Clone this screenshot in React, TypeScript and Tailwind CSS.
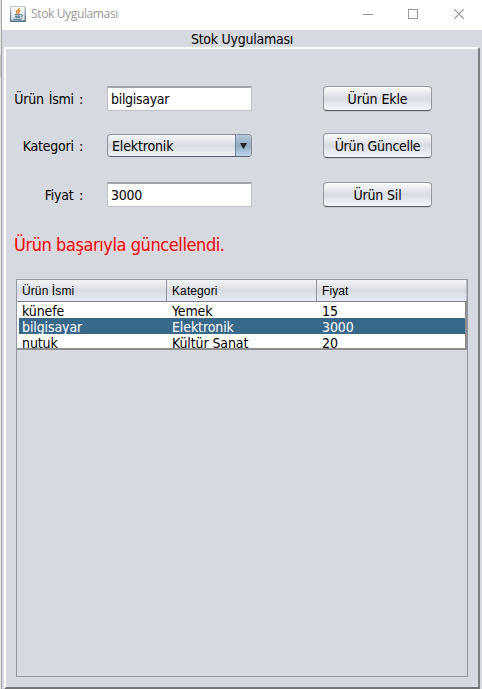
import React from "react";

const TAHOMA = "font-['DejaVu_Sans_Condensed','DejaVu_Sans',sans-serif] [font-stretch:condensed]";

function JavaIcon() {
  return (
    <svg width="16" height="16" viewBox="0 0 16 16" className="block shrink-0">
      <defs>
        <linearGradient id="frame" x1="0" y1="0" x2="0" y2="1">
          <stop offset="0" stopColor="#c3ccd3" />
          <stop offset="1" stopColor="#456984" />
        </linearGradient>
        <linearGradient id="face" x1="0" y1="0" x2="0" y2="1">
          <stop offset="0" stopColor="#fafafa" />
          <stop offset="1" stopColor="#d9e1e6" />
        </linearGradient>
      </defs>
      <rect x="0" y="0" width="16" height="16" rx="1.5" fill="url(#frame)" />
      <rect x="1.2" y="1" width="13.4" height="13.6" rx="0.8" fill="url(#face)" />
      <path d="M9.3 1.8C9.8 4 6 4.6 6.4 6.4c.1.6.7 1 1 1.5M10.4 4.4C8.6 5 8 5.8 8.6 6.6c.4.6.2 1-.2 1.5" fill="none" stroke="#ee7f1f" strokeWidth="1.3" />
      <path d="M4.6 8.7h6.2M5 10.3h5.4M5.4 11.7h4.4M3.2 13.1c2.4.8 6.6.7 8.8-.3M11 8.8c2.2-.6 2.4 1.4-.1 2.3" fill="none" stroke="#3f6a8c" strokeWidth="0.95" />
    </svg>
  );
}

function TitleBar() {
  return (
    <header className="flex h-[30px] shrink-0 items-start bg-white">
      <div className="flex items-center gap-[5px] pl-2 pt-1.5">
        <JavaIcon />
        <span className="font-['Open_Sans','Noto_Sans',sans-serif] text-[12px] leading-[16px] tracking-[-0.36px] text-[#999] [font-stretch:normal]">
          Stok Uygulaması
        </span>
      </div>
      <div className="ml-auto flex gap-[35px] pr-[17px] pt-[9px]">
        <svg width="11" height="11" viewBox="0 0 11 11" shapeRendering="crispEdges">
          <path d="M0 5.5h10" stroke="#999" />
        </svg>
        <svg width="11" height="11" viewBox="0 0 11 11" shapeRendering="crispEdges" className="-ml-px">
          <rect x="0.5" y="0.5" width="9" height="9" fill="none" stroke="#999" />
        </svg>
        <svg width="11" height="11" viewBox="0 0 11 11">
          <path d="M0.2 0.2l9.6 9.6M9.8 0.2l-9.6 9.6" stroke="#909090" strokeWidth="1.1" />
        </svg>
      </div>
    </header>
  );
}

function Label({ children, className = "" }: { children: string; className?: string }) {
  return (
    <label className={`w-[77px] shrink-0 whitespace-nowrap text-right leading-[26px] ${className}`}>{children}</label>
  );
}

function TextField({ value }: { value: string }) {
  return (
    <div className="ml-6 h-[25px] w-[145px] shrink-0 border border-t-2 border-[#bfc1c5] border-t-[#a2a3a6] bg-white pl-[3px] leading-[22px] tracking-[-0.3px]">
      {value}
    </div>
  );
}

function Combo() {
  return (
    <div className="ml-6 flex h-[23px] w-[145px] shrink-0 overflow-hidden rounded-[4px] border border-[#8c9099] border-b-[#5b6170] bg-linear-to-b from-[#f6f7f9] via-[#d9dce2] to-[#f0f2f8]">
      <span className="grow pl-1 leading-[22px] tracking-[-0.15px]">Elektronik</span>
      <span className="flex w-4 items-center justify-center border-l border-[#6d8499] bg-linear-to-b from-[#b5c8d9] via-[#8facc4] to-[#bdd6ea]">
        <svg width="7" height="6" viewBox="0 0 7 6">
          <path d="M0 0h7L4 5.5H3z" fill="#222" />
        </svg>
      </span>
    </div>
  );
}

function Button({ children, className = "tracking-[-0.1px]" }: { children: string; className?: string }) {
  return (
    <button className={`ml-[71px] h-[25px] w-[109px] shrink-0 whitespace-nowrap rounded-[4px] border border-[#94979e] border-b-[#5c5e64] bg-linear-to-b from-[#fafbfc] via-[#d9dce2] to-[#f4f6fb] text-center leading-[22px] shadow-[0_1px_0_#c3c6cc] ${className}`}>
      {children}
    </button>
  );
}

const rows = [
  ["künefe", "Yemek", "15"],
  ["bilgisayar", "Elektronik", "3000"],
  ["nutuk", "Kültür Sanat", "20"],
];

function Table() {
  return (
    <section className="ml-[10px] mt-[23px] h-[398px] w-[452px] border border-[#9297a1]">
      <div className="flex h-[22px] border-b border-[#7c808a] bg-linear-to-b from-[#f4f5f7] via-[#d8dbe1] to-[#e8ebf4] font-['Liberation_Sans',Arial,sans-serif] text-[12px] leading-[22px] tracking-[0.1px]">
        {["Ürün İsmi", "Kategori", "Fiyat"].map((h) => (
          <div key={h} className="w-[150px] border-r border-[#8f949e] pl-[5px] last:border-[#b6bac3]">
            {h}
          </div>
        ))}
      </div>
      <div className="h-12 overflow-hidden border-b-2 border-r-2 border-[#8e8e8e] bg-white pl-0.5 tracking-[-0.1px]">
        {rows.map((r) => (
          <div
            key={r[0]}
            className={`flex h-4 overflow-hidden leading-[18px] ${r[0] === "bilgisayar" ? "bg-[#39698a] text-white" : ""}`}
          >
            <div className="w-[150px] shrink-0 pl-[3px]">{r[0]}</div>
            <div className="w-[150px] shrink-0 pl-[3px]">{r[1]}</div>
            <div className="pl-[3px]">{r[2]}</div>
          </div>
        ))}
      </div>
    </section>
  );
}

export default function App() {
  return (
    <div className={`flex h-[689px] w-[482px] overflow-hidden text-[14px] tracking-[-0.25px] text-black ${TAHOMA}`}>
      <div className="w-0.5 shrink-0 border-r border-[#a3a4a6] bg-[#e4e5e6]">
        <div className="mt-[55px] h-[22px] bg-[#c5c6c8]" />
      </div>
      <main className="flex w-[480px] flex-col bg-[#d6d9df]">
        <TitleBar />
        <h1 className="h-[17px] shrink-0 text-center leading-[18px]">Stok Uygulaması</h1>
        <div className="ml-0.5 flex h-[642px] w-[476px] flex-col border-2 border-b-[#737476] border-l-white border-r-[#7c7d80] border-t-white">
          <div className="mt-[37px] flex h-[25px]">
            <Label className="[word-spacing:1.4px]">Ürün İsmi :</Label>
            <TextField value="bilgisayar" />
            <Button>Ürün Ekle</Button>
          </div>
          <div className="mt-[22px] flex h-[25px] items-center">
            <Label className="[word-spacing:1.6px]">Kategori :</Label>
            <Combo />
            <Button className="tracking-[-0.3px]">Ürün Güncelle</Button>
          </div>
          <div className="mt-6 flex h-[25px]">
            <Label className="[word-spacing:1.8px]">Fiyat :</Label>
            <TextField value="3000" />
            <Button className="tracking-[-0.15px]">Ürün Sil</Button>
          </div>
          <p className="ml-2 mt-[25px] h-6 text-[18px] leading-[25px] tracking-[-0.42px] text-[#ff0000]">
            Ürün başarıyla güncellendi.
          </p>
          <Table />
        </div>
      </main>
    </div>
  );
}
